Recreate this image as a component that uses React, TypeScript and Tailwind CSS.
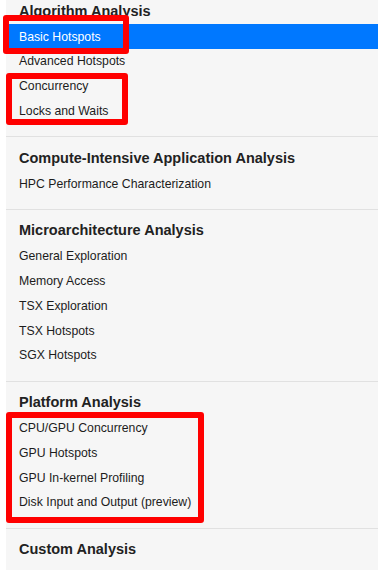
import React from 'react';

interface Section {
  title: string;
  items: string[];
}

const sections: Section[] = [
  { title: 'Algorithm Analysis', items: ['Basic Hotspots', 'Advanced Hotspots', 'Concurrency', 'Locks and Waits'] },
  { title: 'Compute-Intensive Application Analysis', items: ['HPC Performance Characterization'] },
  {
    title: 'Microarchitecture Analysis',
    items: ['General Exploration', 'Memory Access', 'TSX Exploration', 'TSX Hotspots', 'SGX Hotspots'],
  },
  {
    title: 'Platform Analysis',
    items: ['CPU/GPU Concurrency', 'GPU Hotspots', 'GPU In-kernel Profiling', 'Disk Input and Output (preview)'],
  },
  { title: 'Custom Analysis', items: [] },
];

const selected = 'Basic Hotspots';

export default function App() {
  return (
    <div
      className="relative min-h-screen w-[378px] bg-white pl-[6px]"
      style={{ fontFamily: '"Liberation Sans", Arial, sans-serif' }}
    >
      <div className="min-h-screen bg-[#f6f6f6]">
        {sections.map((s, i) => (
          <div
            key={s.title}
            className={i === 0 ? 'pb-[13px]' : 'border-t border-[#e1e1e1] pt-[10px] pb-[13px]'}
          >
            <div className="mb-[4px] flex h-[20px] items-center pl-[13px] pt-[3px] text-[14.5px] font-bold text-[#222]">
              {s.title}
            </div>
            {s.items.map(item => (
              <div
                key={item}
                className={
                  item === selected
                    ? 'flex h-[24.75px] items-center bg-[#0078ff] pl-[13px] pt-[1px] text-[12.25px] text-white'
                    : 'flex h-[24.75px] items-center pl-[13px] pt-[1px] text-[12.25px] text-[#1c1c1c]'
                }
              >
                {item}
              </div>
            ))}
          </div>
        ))}
      </div>

      {/* highlight boxes */}
      <div className="absolute left-[3px] top-[15px] h-[39px] w-[126px] rounded-[3px] border-[6px] border-[#ff0000]" />
      <div className="absolute left-[6px] top-[73px] h-[52px] w-[122px] rounded-[3px] border-[6px] border-[#ff0000]" />
      <div className="absolute left-[6px] top-[412px] h-[111px] w-[198px] rounded-[3px] border-[6px] border-[#ff0000]" />
    </div>
  );
}
